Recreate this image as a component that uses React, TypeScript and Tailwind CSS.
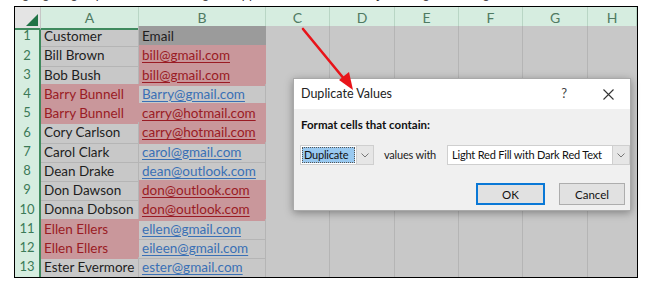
const cols = ['A', 'B', 'C', 'D', 'E', 'F', 'G', 'H'];

type Row = { name: string; email: string; redA?: boolean; redB?: boolean };

const rows: Row[] = [
  { name: 'Bill Brown', email: 'bill@gmail.com', redB: true },
  { name: 'Bob Bush', email: 'bill@gmail.com', redB: true },
  { name: 'Barry Bunnell', email: 'Barry@gmail.com', redA: true },
  { name: 'Barry Bunnell', email: 'carry@hotmail.com', redA: true, redB: true },
  { name: 'Cory Carlson', email: 'carry@hotmail.com', redB: true },
  { name: 'Carol Clark', email: 'carol@gmail.com' },
  { name: 'Dean Drake', email: 'dean@outlook.com' },
  { name: 'Don Dawson', email: 'don@outlook.com', redB: true },
  { name: 'Donna Dobson', email: 'don@outlook.com', redB: true },
  { name: 'Ellen Ellers', email: 'ellen@gmail.com', redA: true },
  { name: 'Ellen Ellers', email: 'eileen@gmail.com', redA: true },
  { name: 'Ester Evermore', email: 'ester@gmail.com' },
];

const grid = 'grid grid-cols-[26px_98px_127px_64px_65px_64px_64px_65px_49px]';

function RowHead({ n }: { n?: number }) {
  return (
    <div className="flex items-center justify-center border-r-2 border-r-[#3f8a5e] border-b border-b-[#c3d6ca] bg-[#d6ede0] text-[#3b7a57] text-[13px]">
      {n}
    </div>
  );
}

function Blank({ last }: { last?: boolean }) {
  return <div className={`border-b border-[#b5b5b5] ${last ? '' : 'border-r'} bg-[#c8c8c8]`} />;
}

function Blanks() {
  return (
    <>
      {[0, 1, 2, 3, 4, 5].map((i) => (
        <Blank key={i} last={i === 5} />
      ))}
    </>
  );
}

function Chevron() {
  return (
    <div className="flex items-center justify-center w-[17px] border-l border-[#cfcfcf] bg-[#e6e6e6]">
      <svg width="8" height="5" viewBox="0 0 8 5">
        <path d="M0.5 0.5 L4 4 L7.5 0.5" stroke="#777" strokeWidth="1" fill="none" />
      </svg>
    </div>
  );
}

export default function App() {
  return (
    <div className="relative w-[647px] h-[289px] bg-white overflow-hidden font-['Lato',sans-serif]">
      <div className="h-[6px] overflow-hidden">
        <p className="-mt-[14px] pl-[12px] text-[13px] leading-[15px] text-[#333] whitespace-nowrap font-['Liberation_Sans',sans-serif]">
          highlighting duplicate values using the approach shown above, you will get a dialog box similar to this one
        </p>
      </div>

      <div className="ml-[14px] w-[624px] h-[272px] border border-black overflow-hidden bg-[#c8c8c8]">
        {/* column headers */}
        <div className={`${grid} h-[19px]`}>
          <div className="relative bg-[#e4e4e4] border-r border-[#c6c6c6] border-b-2 border-b-[#3f8a5e]">
            <div className="absolute right-[2px] bottom-[2px] w-0 h-0 border-l-[12px] border-l-transparent border-b-[12px] border-b-[#217346]" />
          </div>
          {cols.map((c) => (
            <div
              key={c}
              className="flex items-center justify-center bg-[#d6ede0] border-r border-[#b9d6c5] border-b-2 border-b-[#3f8a5e] text-[14px] text-[#4f7a62]"
            >
              {c}
            </div>
          ))}
        </div>

        {/* row 1 */}
        <div className={`${grid} h-[19.25px] text-[13.5px]`}>
          <RowHead n={1} />
          <div className="flex items-center pl-[3px] border-r border-b border-[#b5b5b5] text-[#1e1e1e]">Customer</div>
          <div className="flex items-center pl-[3px] bg-[#9b9b9b] border-b border-[#9b9b9b] text-[#1e1e1e]">Email</div>
          <Blanks />
        </div>

        {rows.map((r, i) => (
          <div key={i} className={`${grid} h-[19.25px] text-[13.5px]`}>
            <RowHead n={i + 2} />
            <div
              className={`flex items-center pl-[3px] whitespace-nowrap border-r border-b ${
                r.redA ? 'bg-[#c9979b] border-[#c9979b] text-[#9a1b24]' : 'border-[#b5b5b5] text-[#1e1e1e]'
              }`}
            >
              {r.name}
            </div>
            <div
              className={`flex items-center pl-[3px] whitespace-nowrap border-r border-b ${
                r.redB ? 'bg-[#c9979b] border-[#c9979b] text-[#9a1b24]' : 'border-[#b5b5b5] text-[#3a70b5]'
              }`}
            >
              <span className="underline underline-offset-2">{r.email}</span>
            </div>
            <Blanks />
          </div>
        ))}
        <div className={`${grid} h-[19px]`}>
          <RowHead />
          <Blank />
          <Blank />
          <Blanks />
        </div>
      </div>

      {/* dialog */}
      <div className="absolute left-[293px] top-[78px] w-[338px] h-[133px] border border-[#a9a9a9] bg-[#f0f0f0] shadow-[0_2px_8px_rgba(0,0,0,0.35)] font-['Lato',sans-serif]">
        <div className="flex items-center h-[30px] bg-white pl-[7px] pr-[14px] text-[12.5px] text-[#222]">
          <span>Duplicate Values</span>
          <span className="ml-auto mr-[36px] text-[13px] text-[#444]">?</span>
          <svg width="11" height="11" viewBox="0 0 11 11" className="mr-[2px]">
            <path d="M0.5 0.5 L10.5 10.5 M10.5 0.5 L0.5 10.5" stroke="#333" strokeWidth="1.1" fill="none" />
          </svg>
        </div>
        <div className="pl-[7px] pt-[7px] text-[11.5px] font-bold text-[#111]">Format cells that contain:</div>
        <div className="flex items-center mt-[12px] pl-[6px] h-[20px] text-[11px] tracking-[-0.2px] text-[#111] whitespace-nowrap">
          <div className="flex h-[20px] w-[74px] border border-[#cfcfcf] bg-white">
            <div className="flex items-center flex-1 m-[1px] px-[1px] bg-[#99c9f0] border border-dotted border-[#555]">Duplicate</div>
            <Chevron />
          </div>
          <span className="ml-[10px] text-[#222]">values with</span>
          <div className="flex ml-[11px] h-[20px] w-[183px] border border-[#cfcfcf] bg-white">
            <div className="flex items-center flex-1 pl-[4px]">Light Red Fill with Dark Red Text</div>
            <Chevron />
          </div>
        </div>
        <div className="flex justify-end gap-[14px] mt-[18px] pr-[5px] text-[11.5px] text-[#111]">
          <button className="w-[69px] h-[22px] border-2 border-[#0a78d6] bg-[#e1e1e1]">OK</button>
          <button className="w-[66px] h-[22px] border border-[#adadad] bg-[#e1e1e1]">Cancel</button>
        </div>
      </div>

      {/* red annotation arrow */}
      <svg className="absolute left-0 top-0 pointer-events-none" width="647" height="289">
        <line x1="303" y1="29" x2="345" y2="80" stroke="#e8141a" strokeWidth="2.6" strokeLinecap="round" />
        <polygon points="353,90 339,80 349,72" fill="#e8141a" />
      </svg>
    </div>
  );
}
